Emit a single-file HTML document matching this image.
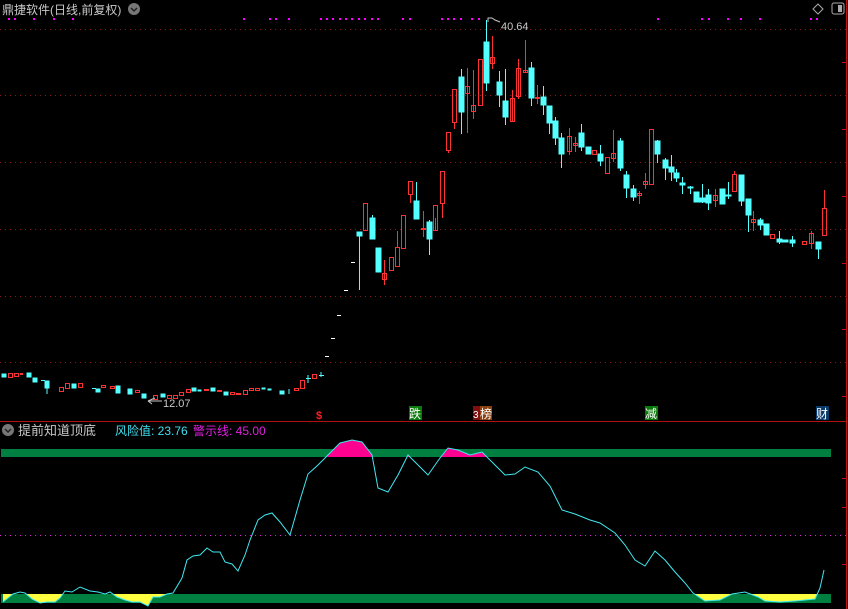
<!DOCTYPE html>
<html><head><meta charset="utf-8"><style>
html,body{margin:0;padding:0;background:#000;width:848px;height:609px;overflow:hidden}
svg{display:block}
text{font-family:"Liberation Sans","Noto Sans CJK SC",sans-serif}
</style></head><body>
<svg width="848" height="609" viewBox="0 0 848 609" xmlns="http://www.w3.org/2000/svg">
<defs>
<clipPath id="ct"><rect x="0" y="400" width="848" height="57"/></clipPath>
<clipPath id="cb"><rect x="0" y="594" width="848" height="15"/></clipPath>
</defs>
<rect width="848" height="609" fill="#000"/>
<g stroke="#8a1a1a" stroke-width="1" stroke-dasharray="1,4">
<line x1="0" y1="29.5" x2="846" y2="29.5"/>
<line x1="0" y1="95.5" x2="846" y2="95.5"/>
<line x1="0" y1="162.5" x2="846" y2="162.5"/>
<line x1="0" y1="229.5" x2="846" y2="229.5"/>
<line x1="0" y1="296.5" x2="846" y2="296.5"/>
<line x1="0" y1="362.5" x2="846" y2="362.5"/>
</g>
<line x1="0" y1="421.5" x2="846" y2="421.5" stroke="#b01010"/>
<line x1="846.5" y1="0" x2="846.5" y2="609" stroke="#c01010"/>
<line x1="0" y1="535.5" x2="846" y2="535.5" stroke="#e020e0" stroke-dasharray="1,4"/>
<text x="2" y="14" fill="#c8c8c8" font-size="12">鼎捷软件(日线,前复权)</text>
<circle cx="134" cy="9" r="6" fill="#777"/>
<path d="M131,8 L134,11 L137,8" stroke="#222" stroke-width="1.5" fill="none"/>
<path d="M818,4 L823,9 L818,14 L813,9 Z" stroke="#aaa" fill="none"/>
<rect x="832" y="3" width="12" height="11" rx="2" stroke="#aaa" fill="none"/>
<rect x="838" y="5" width="4" height="7" fill="#aaa"/>
<g fill="#ff00ff">
<rect x="8" y="18" width="2" height="2"/><rect x="14" y="18" width="2" height="2"/><rect x="33" y="18" width="2" height="2"/><rect x="53" y="18" width="2" height="2"/><rect x="72" y="18" width="2" height="2"/>
<rect x="243" y="18" width="2" height="2"/><rect x="269" y="18" width="2" height="2"/><rect x="275" y="18" width="2" height="2"/><rect x="288" y="18" width="2" height="2"/>
<rect x="320" y="18" width="2" height="2"/><rect x="326" y="18" width="2" height="2"/><rect x="332" y="18" width="2" height="2"/><rect x="339" y="18" width="2" height="2"/><rect x="345" y="18" width="2" height="2"/><rect x="351" y="18" width="2" height="2"/><rect x="358" y="18" width="2" height="2"/><rect x="364" y="18" width="2" height="2"/><rect x="371" y="18" width="2" height="2"/><rect x="377" y="18" width="2" height="2"/>
<rect x="402" y="18" width="2" height="2"/><rect x="409" y="18" width="2" height="2"/>
<rect x="441" y="18" width="2" height="2"/><rect x="447" y="18" width="2" height="2"/><rect x="453" y="18" width="2" height="2"/><rect x="460" y="18" width="2" height="2"/><rect x="471" y="18" width="2" height="2"/><rect x="478" y="18" width="2" height="2"/>
<rect x="657" y="18" width="2" height="2"/><rect x="701" y="18" width="2" height="2"/><rect x="708" y="18" width="2" height="2"/><rect x="727" y="18" width="2" height="2"/><rect x="740" y="18" width="2" height="2"/><rect x="759" y="18" width="2" height="2"/><rect x="810" y="18" width="2" height="2"/><rect x="816" y="18" width="2" height="2"/>
</g>
<g stroke="#fff"><line x1="344" y1="290.5" x2="348" y2="290.5"/><line x1="351" y1="262.5" x2="355" y2="262.5"/><line x1="337" y1="315.5" x2="341" y2="315.5"/><line x1="331" y1="338.5" x2="335" y2="338.5"/><line x1="325" y1="356.5" x2="329" y2="356.5"/></g>
<g fill="#54ffff" stroke="#54ffff">
<line x1="359.5" y1="232" x2="359.5" y2="290"/><rect x="357" y="232" width="5" height="4"/>
<line x1="372.5" y1="215" x2="372.5" y2="239"/><rect x="370" y="218" width="5" height="21"/>
<rect x="376" y="248" width="5" height="24"/>
<line x1="429.5" y1="220" x2="429.5" y2="255"/><rect x="427" y="222" width="5" height="17"/>
<line x1="416.5" y1="182" x2="416.5" y2="219"/><rect x="414" y="201" width="5" height="18"/>
<line x1="461.5" y1="69" x2="461.5" y2="134"/><rect x="459" y="77" width="5" height="35"/>
<line x1="486.5" y1="20" x2="486.5" y2="91"/><rect x="484" y="42" width="5" height="41"/>
<line x1="499.5" y1="71" x2="499.5" y2="107"/><rect x="497" y="82" width="5" height="13"/>
<line x1="505.5" y1="69" x2="505.5" y2="125"/><rect x="503" y="101" width="5" height="16"/>
<line x1="531.5" y1="62" x2="531.5" y2="106"/><rect x="529" y="68" width="5" height="30"/>
<line x1="543.5" y1="86" x2="543.5" y2="115"/><rect x="541" y="97" width="5" height="8"/>
<line x1="549.5" y1="106" x2="549.5" y2="134"/><rect x="547" y="106" width="5" height="17"/>
<line x1="555.5" y1="117" x2="555.5" y2="145"/><rect x="553" y="121" width="5" height="17"/>
<line x1="561.5" y1="133" x2="561.5" y2="168"/><rect x="559" y="138" width="5" height="16"/>
<line x1="581.5" y1="124" x2="581.5" y2="151"/><rect x="579" y="133" width="5" height="14"/>
<rect x="586" y="147" width="5" height="7"/>
<line x1="600.5" y1="145" x2="600.5" y2="166"/><rect x="598" y="154" width="5" height="7"/>
<line x1="620.5" y1="138" x2="620.5" y2="171"/><rect x="618" y="141" width="5" height="27"/>
<line x1="626.5" y1="171" x2="626.5" y2="198"/><rect x="624" y="175" width="5" height="13"/>
<line x1="633.5" y1="185" x2="633.5" y2="201"/><rect x="631" y="189" width="5" height="8"/>
<line x1="657.5" y1="140" x2="657.5" y2="163"/><rect x="655" y="141" width="5" height="13"/>
<line x1="665.5" y1="158" x2="665.5" y2="180"/><rect x="663" y="160" width="5" height="8"/>
<line x1="671.5" y1="155" x2="671.5" y2="181"/><rect x="669" y="167" width="5" height="5"/>
<line x1="676.5" y1="169" x2="676.5" y2="182"/><rect x="674" y="173" width="5" height="5"/>
<line x1="682.5" y1="177" x2="682.5" y2="194"/><rect x="680" y="183" width="5" height="2"/>
<line x1="690.5" y1="186" x2="690.5" y2="194"/><rect x="688" y="187" width="5" height="1"/>
<rect x="694" y="192" width="5" height="10"/>
<line x1="702.5" y1="184" x2="702.5" y2="203"/><rect x="700" y="198" width="5" height="4"/>
<line x1="708.5" y1="189" x2="708.5" y2="210"/><rect x="706" y="195" width="5" height="8"/>
<rect x="720" y="189" width="5" height="15"/>
<line x1="728.5" y1="182" x2="728.5" y2="199"/><rect x="726" y="195" width="5" height="1"/>
<line x1="741.5" y1="175" x2="741.5" y2="206"/><rect x="739" y="175" width="5" height="26"/>
<line x1="748.5" y1="199" x2="748.5" y2="232"/><rect x="746" y="199" width="5" height="16"/>
<line x1="760.5" y1="218" x2="760.5" y2="230"/><rect x="758" y="220" width="5" height="5"/>
<rect x="764" y="224" width="5" height="11"/>
<line x1="779.5" y1="231" x2="779.5" y2="244"/><rect x="777" y="239" width="5" height="3"/>
<rect x="783" y="240" width="5" height="2"/>
<line x1="792.5" y1="236" x2="792.5" y2="247"/><rect x="790" y="240" width="5" height="3"/>
<line x1="818.5" y1="242" x2="818.5" y2="259"/><rect x="816" y="242" width="5" height="7"/>
</g>
<g fill="none" stroke="#ff3232">
<rect x="363.5" y="203.5" width="4" height="27"/>
<line x1="384.5" y1="260" x2="384.5" y2="285"/><rect x="382.5" y="273.5" width="4" height="6"/>
<rect x="389.5" y="257.5" width="4" height="13"/>
<line x1="397.5" y1="231" x2="397.5" y2="247"/><rect x="395.5" y="247.5" width="4" height="19"/>
<rect x="401.5" y="215.5" width="4" height="33"/>
<line x1="410.5" y1="194" x2="410.5" y2="203"/><rect x="408.5" y="181.5" width="4" height="13"/>
<line x1="423.5" y1="211" x2="423.5" y2="237"/><rect x="421.5" y="228.5" width="4" height="1"/>
<line x1="435.5" y1="231" x2="435.5" y2="218"/><rect x="433.5" y="205.5" width="4" height="25"/>
<rect x="440.5" y="171.5" width="4" height="32"/><line x1="442.5" y1="203" x2="442.5" y2="218"/>
<rect x="446.5" y="132.5" width="4" height="18"/><line x1="448.5" y1="150" x2="448.5" y2="153"/>
<rect x="452.5" y="89.5" width="4" height="33"/><line x1="454.5" y1="123" x2="454.5" y2="129"/>
<line x1="467.5" y1="68" x2="467.5" y2="133"/><rect x="465.5" y="86.5" width="4" height="7"/>
<line x1="473.5" y1="70" x2="473.5" y2="119"/><rect x="471.5" y="105.5" width="4" height="6"/>
<rect x="478.5" y="59.5" width="4" height="46"/>
<line x1="492.5" y1="36" x2="492.5" y2="69"/><rect x="490.5" y="57.5" width="4" height="6"/>
<line x1="512.5" y1="90" x2="512.5" y2="121"/><rect x="510.5" y="98.5" width="4" height="23"/>
<line x1="518.5" y1="59" x2="518.5" y2="99"/><rect x="516.5" y="68.5" width="4" height="28"/>
<line x1="525.5" y1="40" x2="525.5" y2="72"/><rect x="523.5" y="70.5" width="4" height="2"/>
<line x1="537.5" y1="85" x2="537.5" y2="104"/><rect x="535.5" y="97.5" width="4" height="1"/>
<line x1="569.5" y1="128" x2="569.5" y2="155"/><rect x="567.5" y="136.5" width="4" height="15"/>
<line x1="575.5" y1="137" x2="575.5" y2="152"/><rect x="573.5" y="143.5" width="4" height="2"/>
<rect x="592.5" y="150.5" width="4" height="4"/>
<rect x="605.5" y="157.5" width="4" height="16"/>
<line x1="613.5" y1="130" x2="613.5" y2="162"/><rect x="611.5" y="153.5" width="4" height="5"/>
<line x1="639.5" y1="191" x2="639.5" y2="204"/><rect x="637.5" y="193.5" width="4" height="2"/>
<line x1="645.5" y1="173" x2="645.5" y2="189"/><rect x="643.5" y="181.5" width="4" height="3"/>
<rect x="649.5" y="129.5" width="4" height="55"/>
<line x1="715.5" y1="189" x2="715.5" y2="207"/><rect x="713.5" y="195.5" width="4" height="5"/>
<rect x="732.5" y="174.5" width="4" height="17"/><line x1="734.5" y1="171" x2="734.5" y2="174"/>
<line x1="753.5" y1="211" x2="753.5" y2="231"/><rect x="751.5" y="219.5" width="4" height="3"/>
<rect x="770.5" y="234.5" width="4" height="4"/>
<rect x="802.5" y="241.5" width="4" height="3"/>
<line x1="811.5" y1="231" x2="811.5" y2="249"/><rect x="809.5" y="233.5" width="4" height="10"/>
<line x1="824.5" y1="190" x2="824.5" y2="208"/><rect x="822.5" y="208.5" width="4" height="27"/>
</g>
<g fill="#54ffff" stroke="#54ffff">
<rect x="2" y="374" width="4" height="3"/><rect x="27" y="373" width="4" height="4"/><rect x="33" y="378" width="4" height="4"/><line x1="41" y1="380.5" x2="45" y2="380.5"/><rect x="45" y="381" width="4" height="7"/><line x1="47" y1="381" x2="47" y2="394"/>
<rect x="72" y="384" width="4" height="4"/><line x1="92" y1="388.5" x2="96" y2="388.5"/><rect x="96" y="389" width="4" height="3"/><rect x="116" y="386" width="4" height="7"/><rect x="128" y="389" width="4" height="5"/><rect x="142" y="394" width="4" height="4"/><rect x="161" y="394" width="4" height="3"/><rect x="192" y="388" width="4" height="3"/><rect x="198" y="390" width="3" height="1"/><rect x="211" y="388" width="4" height="3"/><rect x="224" y="392" width="4" height="3"/><rect x="262" y="388" width="3" height="1"/><rect x="268" y="389" width="3" height="1"/><rect x="280" y="391" width="4" height="3"/><line x1="289" y1="389" x2="289" y2="394"/><line x1="308" y1="375" x2="308" y2="383"/><line x1="306" y1="378.5" x2="311" y2="378.5"/><line x1="321" y1="372" x2="321" y2="377"/><line x1="319" y1="375.5" x2="324" y2="375.5"/>
</g>
<g fill="none" stroke="#ff3232">
<rect x="8.5" y="373.5" width="4" height="4"/><rect x="14.5" y="373.5" width="4" height="3"/><rect x="20.5" y="373.5" width="2" height="1"/><rect x="59.5" y="387.5" width="4" height="4"/><rect x="65.5" y="383.5" width="4" height="5"/><rect x="78.5" y="383.5" width="4" height="4"/><rect x="101.5" y="385.5" width="4" height="2"/><rect x="110.5" y="386.5" width="4" height="2"/><rect x="135.5" y="390.5" width="4" height="2"/><rect x="153.5" y="395.5" width="4" height="4"/><rect x="167.5" y="395.5" width="4" height="3"/><rect x="173.5" y="395.5" width="4" height="3"/><rect x="179.5" y="392.5" width="4" height="3"/><rect x="186.5" y="389.5" width="4" height="3"/><rect x="204.5" y="389.5" width="4" height="1"/><rect x="217.5" y="390.5" width="4" height="1"/><rect x="230.5" y="392.5" width="4" height="2"/><rect x="236.5" y="393.5" width="4" height="1"/><rect x="243.5" y="390.5" width="4" height="4"/><rect x="249.5" y="388.5" width="4" height="2"/><rect x="255.5" y="388.5" width="4" height="2"/><rect x="294.5" y="388.5" width="4" height="2"/><rect x="300.5" y="380.5" width="4" height="8"/><rect x="312.5" y="374.5" width="4" height="4"/>
</g>
<path d="M488,22 L488,18 L492,18 L495,20 L500,22" stroke="#c8c8c8" fill="none"/>
<text x="501" y="30" fill="#c8c8c8" font-size="11">40.64</text>
<path d="M148,401 L155,398 M148,401 L152,404 M148,401 L162,401" stroke="#c8c8c8" fill="none"/>
<text x="163" y="407" fill="#c8c8c8" font-size="11">12.07</text>
<text x="316" y="419" fill="#ff2020" font-size="11" font-weight="bold">$</text>
<rect x="409" y="406" width="13" height="14" fill="#0a7a0a"/><text x="409" y="418" fill="#fff" font-size="12">跌</text>
<rect x="473" y="406" width="7" height="14" fill="#801010"/><text x="473" y="418" fill="#fff" font-size="10">3</text>
<rect x="480" y="406" width="12" height="14" fill="#8a4010"/><text x="480" y="418" fill="#fff" font-size="12">榜</text>
<rect x="645" y="406" width="13" height="14" fill="#0a7a0a"/><text x="645" y="418" fill="#fff" font-size="12">减</text>
<rect x="816" y="406" width="13" height="14" fill="#0a3a6a"/><text x="816" y="418" fill="#fff" font-size="12">财</text>
<circle cx="8" cy="430" r="6" fill="#777"/>
<path d="M5,429 L8,432 L11,429" stroke="#222" stroke-width="1.5" fill="none"/>
<text x="18" y="435" fill="#c8c8c8" font-size="13">提前知道顶底</text>
<text x="115" y="435" fill="#40e0f0" font-size="12">风险值: 23.76</text>
<text x="193" y="435" fill="#e020e0" font-size="12">警示线: 45.00</text>
<rect x="1" y="449" width="830" height="8" fill="#008040"/>
<rect x="1" y="594" width="830" height="9" fill="#008040"/>
<polygon clip-path="url(#ct)" fill="#ff0090" points="250,540 258,520 265,515 272,513 280,522 290,535 300,500 308,474 318,465 328,455 340,443 352,440 362,442 372,455 378,488 388,492 398,475 408,455 418,465 428,475 440,458 448,448 458,450 470,455 482,452 495,465 505,475 515,474 525,467 538,472 550,486 560,510 560,457 250,457"/>
<polygon clip-path="url(#cb)" fill="#ffff40" points="3,602 13,594 20,592 25,593 32,599 40,603 47,602 55,602 60,598 65,591 72,592 80,587 90,591 98,592 105,594 110,592 117,597 125,600 132,602 140,602 148,606 153,597 160,597 167,594 173,593 182,578 182,594 3,594"/>
<polygon clip-path="url(#cb)" fill="#ffff40" points="665,560 675,572 685,583 693,593 705,601 720,600 732,594 745,592 758,597 765,601 780,602 795,601 805,600 815,599 820,588 820,594 665,594"/>
<polyline fill="none" stroke="#40e8f0" stroke-width="1" points="3,602 13,594 20,592 25,593 32,599 40,603 47,602 55,602 60,598 65,591 72,592 80,587 90,591 98,592 105,594 110,592 117,597 125,600 132,602 140,602 148,606 153,597 160,597 167,594 173,593 182,578 187,560 193,556 200,555 207,548 213,552 220,552 225,562 232,564 238,571 245,555 250,540 258,520 265,515 272,513 280,522 290,535 300,500 308,474 318,465 328,455 340,443 352,440 362,442 372,455 378,488 388,492 398,475 408,455 418,465 428,475 440,458 448,448 458,450 470,455 482,452 495,465 505,475 515,474 525,467 538,472 550,486 562,510 575,514 590,520 600,523 615,533 625,545 635,560 645,566 655,551 665,560 675,572 685,583 693,593 705,601 720,600 732,594 745,592 758,597 765,601 780,602 795,601 805,600 815,599 820,588 824,570"/>
<g stroke="#c01010"><line x1="842" y1="62.5" x2="846" y2="62.5"/><line x1="842" y1="129.5" x2="846" y2="129.5"/><line x1="842" y1="196.5" x2="846" y2="196.5"/><line x1="842" y1="263.5" x2="846" y2="263.5"/><line x1="842" y1="329.5" x2="846" y2="329.5"/><line x1="842" y1="396.5" x2="846" y2="396.5"/><line x1="842" y1="478.5" x2="846" y2="478.5"/><line x1="842" y1="507.5" x2="846" y2="507.5"/><line x1="842" y1="564.5" x2="846" y2="564.5"/></g>
</svg>
</body></html>
